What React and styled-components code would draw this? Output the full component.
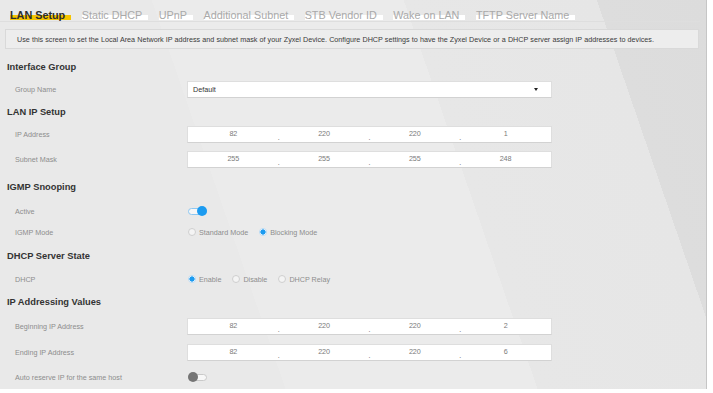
import React from 'react'
import styled, { createGlobalStyle } from 'styled-components'

const GlobalStyle = createGlobalStyle`
  body {
    margin: 0;
    background: #fff;
    font-family: "Liberation Sans", Arial, sans-serif;
  }
`

const tabs = ['LAN Setup', 'Static DHCP', 'UPnP', 'Additional Subnet', 'STB Vendor ID', 'Wake on LAN', 'TFTP Server Name']

export default function App() {
    return (
        <>
            <GlobalStyle />
            <Panel>
                <TabBar>
                    {tabs.map((t, i) => (
                        <Tab key={t} active={i === 0}>{t}</Tab>
                    ))}
                </TabBar>
                <InfoBox>
                    Use this screen to set the Local Area Network IP address and subnet mask of your Zyxel Device. Configure DHCP settings to have the Zyxel Device or a DHCP server assign IP addresses to devices.
                </InfoBox>

                <Form>
                    <SectionTitle h={22}>Interface Group</SectionTitle>
                    <Row h={22}>
                        <Label>Group Name</Label>
                        <Select>
                            Default
                            <Caret />
                        </Select>
                    </Row>

                    <SectionTitle h={24}>LAN IP Setup</SectionTitle>
                    <Row h={21}>
                        <Label>IP Address</Label>
                        <IpField parts={['82', '220', '220', '1']} />
                    </Row>
                    <Row h={29}>
                        <Label>Subnet Mask</Label>
                        <IpField parts={['255', '255', '255', '248']} />
                    </Row>

                    <SectionTitle h={26}>IGMP Snooping</SectionTitle>
                    <Row h={22}>
                        <Label>Active</Label>
                        <Switch on />
                    </Row>
                    <Row h={20}>
                        <Label>IGMP Mode</Label>
                        <RadioGroup>
                            <Option><Radio /><span>Standard Mode</span></Option>
                            <Option><Radio checked /><span>Blocking Mode</span></Option>
                        </RadioGroup>
                    </Row>

                    <SectionTitle h={28}>DHCP Server State</SectionTitle>
                    <Row h={18}>
                        <Label>DHCP</Label>
                        <RadioGroup>
                            <Option><Radio checked /><span>Enable</span></Option>
                            <Option><Radio /><span>Disable</span></Option>
                            <Option><Radio /><span>DHCP Relay</span></Option>
                        </RadioGroup>
                    </Row>

                    <SectionTitle h={28}>IP Addressing Values</SectionTitle>
                    <Row h={20}>
                        <Label>Beginning IP Address</Label>
                        <IpField parts={['82', '220', '220', '2']} />
                    </Row>
                    <Row h={32}>
                        <Label>Ending IP Address</Label>
                        <IpField parts={['82', '220', '220', '6']} />
                    </Row>
                    <Row h={18}>
                        <Label>Auto reserve IP for the same host</Label>
                        <Switch />
                    </Row>
                </Form>
            </Panel>
        </>
    )
}

function IpField({ parts }) {
    return (
        <IpBox>
            {parts.map((p, i) => (
                <React.Fragment key={i}>
                    {i > 0 && <Dot>.</Dot>}
                    <Segment>{p}</Segment>
                </React.Fragment>
            ))}
        </IpBox>
    )
}

function Switch({ on }) {
    return (
        <Track on={on}>
            <Knob on={on} />
        </Track>
    )
}

const Panel = styled.div`
    width: 707px;
    height: 389px;
    box-sizing: border-box;
    border-right: 1px solid #c6c6c6;
    overflow: hidden;
    background: linear-gradient(71deg,
        #e9e9e9 0%, #e9e9e9 34%,
        #ebebeb 34%, #ebebeb 64%,
        #e7e7e7 64%, #e6e6e6 87%,
        #dddddd 87%, #dcdcdc 100%);
`

const TabBar = styled.div`
    display: flex;
    align-items: flex-start;
    gap: 10.5px;
    height: 22px;
    box-sizing: border-box;
    padding: 9px 0 0 10px;
    margin-right: 6px;
    border-bottom: 1px solid #dedede;
`

const Tab = styled.span`
    font-size: 10.8px;
    line-height: 12px;
    padding-right: 6px;
    white-space: nowrap;
    color: ${p => (p.active ? '#2d2d2d' : '#a9a9a9')};
    font-weight: ${p => (p.active ? 700 : 400)};
    background: linear-gradient(transparent 52%, ${p => (p.active ? '#f6c400' : '#ffffff')} 52%, ${p => (p.active ? '#f6c400' : '#ffffff')} 94%, transparent 94%);
`

const InfoBox = styled.div`
    margin: 7px 7px 0 5px;
    height: 20px;
    box-sizing: border-box;
    border: 1px solid #d9d9d9;
    background: #ededed;
    padding-left: 11px;
    display: flex;
    align-items: center;
    font-size: 7.2px;
    word-spacing: 0.15px;
    color: #3a3a3a;
    white-space: nowrap;
`

const Form = styled.div`
    padding: 7px 0 0 7px;
`

const SectionTitle = styled.div`
    height: ${p => p.h}px;
    display: flex;
    align-items: center;
    font-size: 9.3px;
    font-weight: 700;
    color: #333;
`

const Row = styled.div`
    height: ${p => p.h}px;
    display: flex;
    align-items: center;
    padding-left: 8px;
`

const Label = styled.div`
    width: 172px;
    flex-shrink: 0;
    font-size: 7.2px;
    color: #8d8d8d;
`

const InputBase = styled.div`
    width: 365px;
    height: 17px;
    box-sizing: border-box;
    background: #fff;
    border: 1px solid #dedede;
    border-bottom-color: #d2d2d2;
    display: flex;
    align-items: center;
    font-size: 7.2px;
`

const Select = styled(InputBase)`
    justify-content: space-between;
    padding: 0 13px 0 5px;
    color: #333;
`

const Caret = styled.span`
    width: 0;
    height: 0;
    border-left: 2.5px solid transparent;
    border-right: 2.5px solid transparent;
    border-top: 3px solid #222;
`

const IpBox = styled(InputBase)`
    color: #7a7a7a;
    align-items: stretch;
`

const Segment = styled.span`
    flex: 1;
    text-align: center;
    padding-top: 2px;
`

const Dot = styled.span`
    width: 0;
    display: flex;
    justify-content: center;
    align-items: flex-end;
    padding-bottom: 1px;
    color: #555;
    font-size: 7px;
    line-height: 7px;
`

const Track = styled.span`
    margin-left: 1px;
    width: 19px;
    height: 7px;
    box-sizing: border-box;
    border-radius: 4px;
    border: 1px solid ${p => (p.on ? '#8cc7f2' : '#c9c9c9')};
    background: #f7f7f7;
    display: flex;
    align-items: center;
    justify-content: ${p => (p.on ? 'flex-end' : 'flex-start')};
`

const Knob = styled.span`
    flex-shrink: 0;
    width: 10px;
    height: 10px;
    margin: 0 -1px;
    border-radius: 50%;
    background: ${p => (p.on ? '#1c9bf0' : '#757575')};
`

const RadioGroup = styled.div`
    display: flex;
    align-items: center;
    gap: 11px;
    padding-left: 1px;
`

const Option = styled.label`
    display: flex;
    align-items: center;
    gap: 3px;
    font-size: 7.2px;
    color: #8d8d8d;
`

const Radio = styled.span`
    width: 8px;
    height: 8px;
    box-sizing: border-box;
    border-radius: 50%;
    border: 1px solid ${p => (p.checked ? '#b9dbf5' : '#cfcfcf')};
    background: ${p => (p.checked
        ? 'radial-gradient(circle, #1c9bf0 0 2.4px, #ffffff 2.9px)'
        : '#f4f4f4')};
`
